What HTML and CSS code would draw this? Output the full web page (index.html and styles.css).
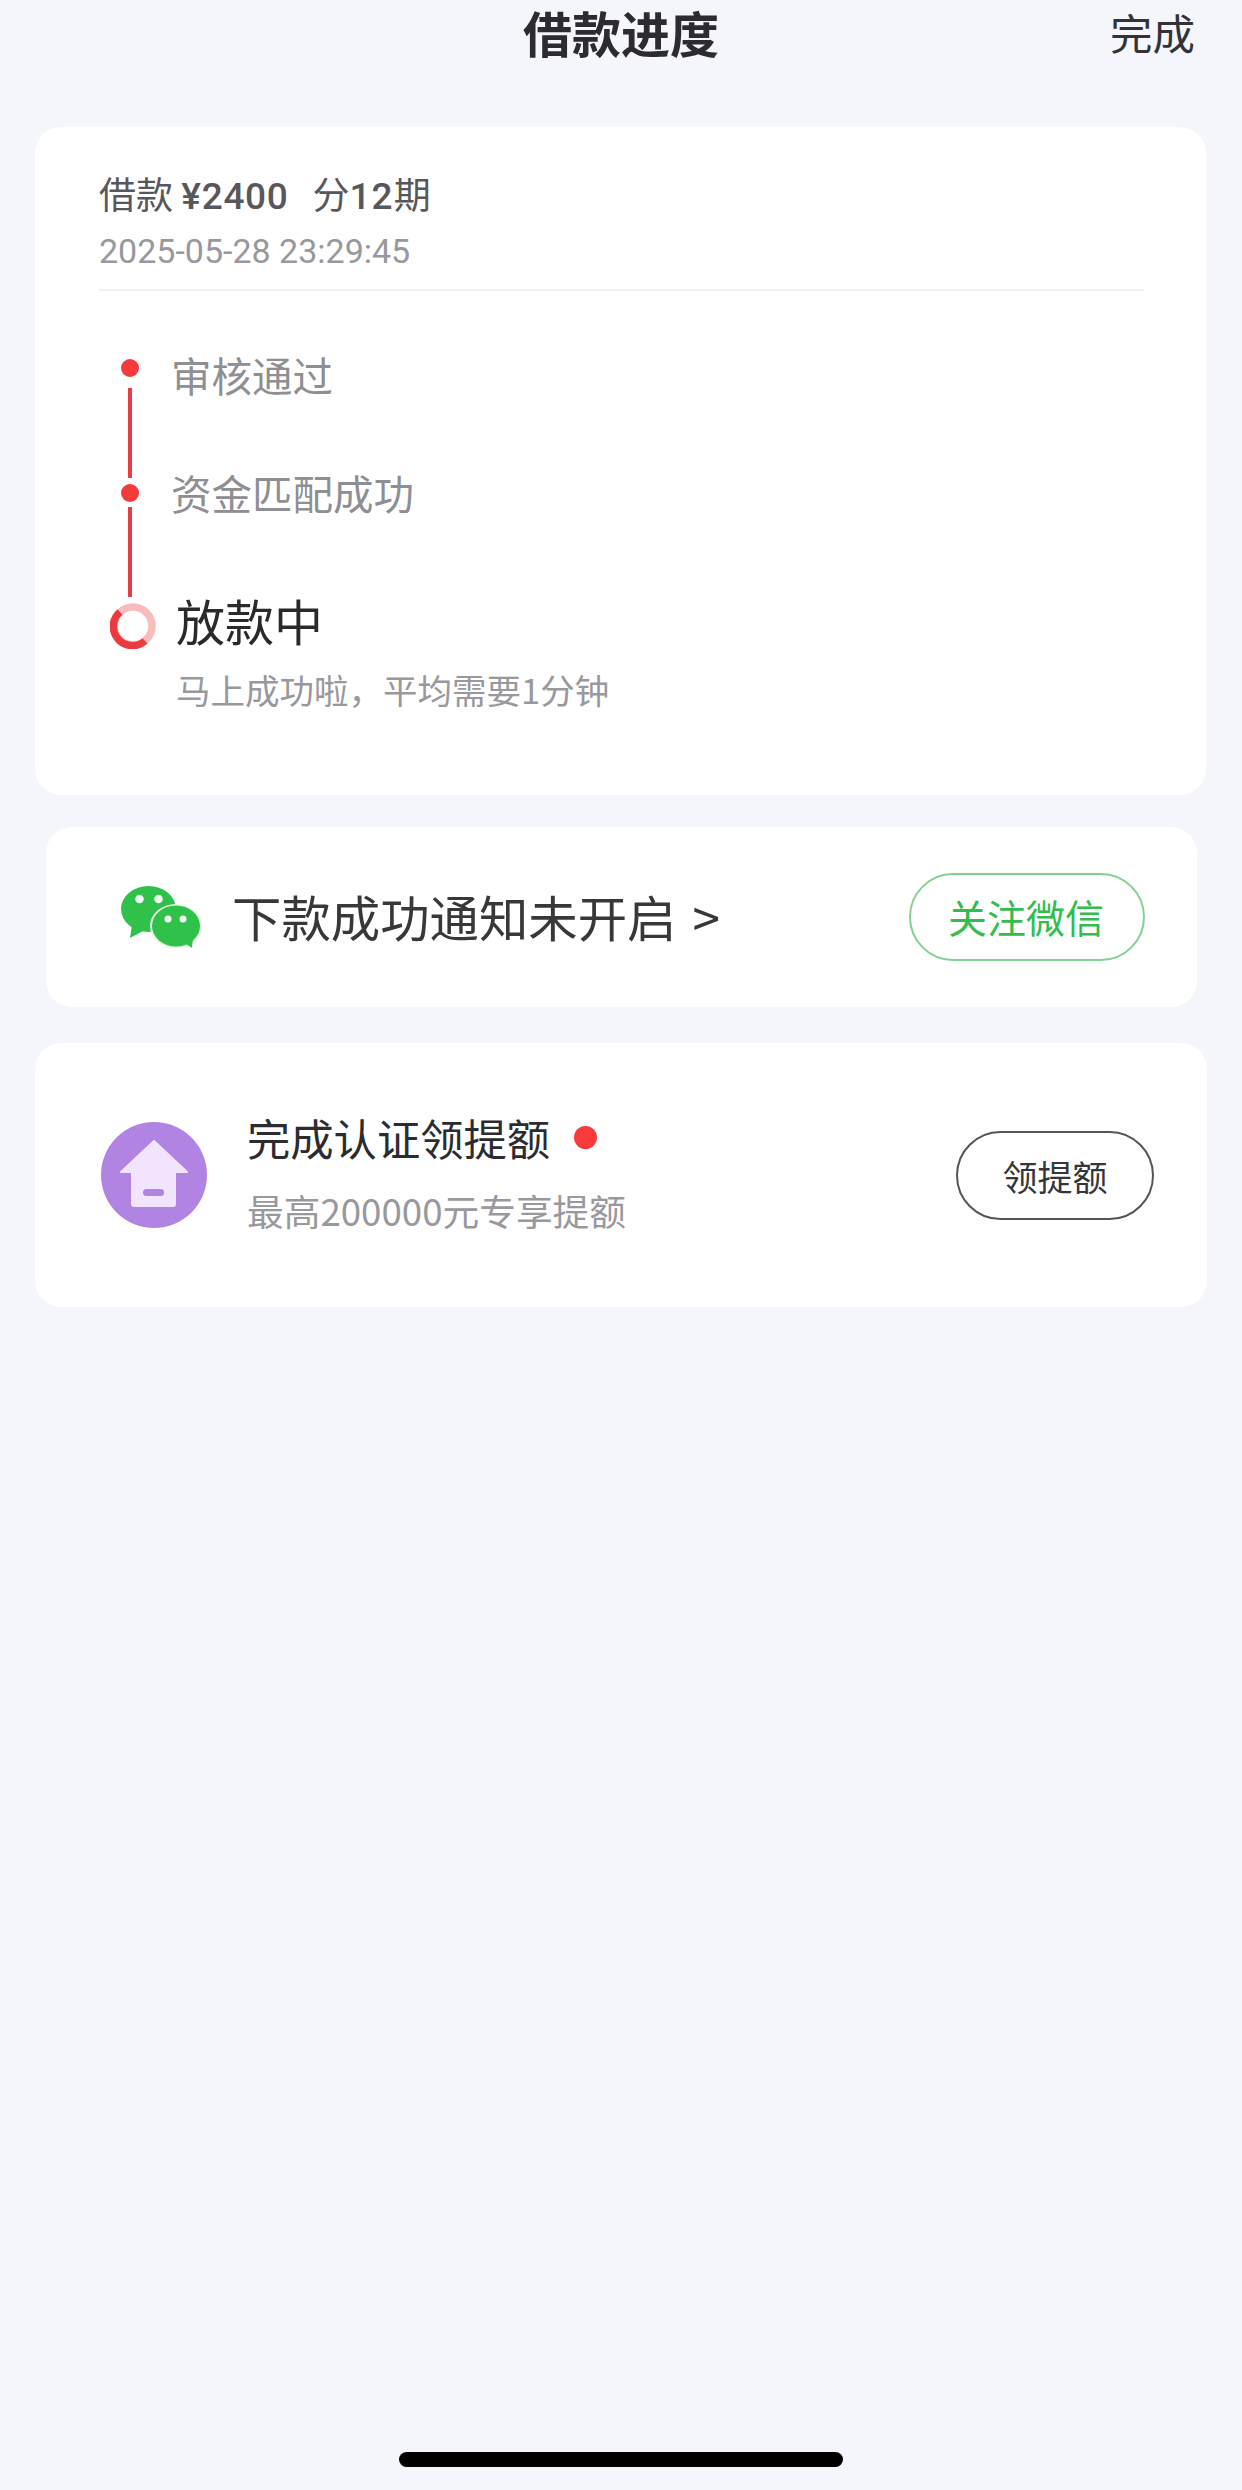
FILE: index.html
```html
<!DOCTYPE html>
<html lang="zh-CN">
<head>
<meta charset="UTF-8">
<meta name="viewport" content="width=device-width, initial-scale=1.0">
<title>借款进度</title>
<link rel="stylesheet" href="styles.css">
</head>
<body>

<header class="topbar">
    <h1 class="topbar-title">借款进度</h1>
    <span class="topbar-done">完成</span>
</header>

<section class="card progress-card">
    <div class="loan-info">
        <div class="loan-amount">借款 <b>¥2400</b><span class="loan-term">分<b>12</b>期</span></div>
        <div class="loan-date">2025-05-28 23:29:45</div>
    </div>
    <div class="timeline">
        <div class="rail">
            <span class="rail-dot"></span>
            <span class="rail-line"></span>
            <span class="rail-dot rail-dot-second"></span>
            <span class="rail-line rail-line-second"></span>
            <svg class="rail-ring" width="46" height="46" viewBox="0 0 46 46">
                <circle cx="23" cy="23" r="19" fill="none" stroke="#f9bcbc" stroke-width="7.5"/>
                <path d="M10 9A19 19 0 0 0 35 38" fill="none" stroke="#ec3a41" stroke-width="7.5"/>
            </svg>
        </div>
        <div class="steps">
            <div class="step-done">审核通过</div>
            <div class="step-done step-second">资金匹配成功</div>
            <div class="step-current">放款中</div>
            <div class="step-note">马上成功啦，平均需要1分钟</div>
        </div>
    </div>
</section>

<section class="card wechat-card">
    <svg class="wechat-icon" width="80" height="64" viewBox="0 0 80 64">
        <ellipse cx="27.5" cy="24" rx="27.5" ry="23" fill="#2fc14a"/>
        <path d="M11 40L9 53L24 45Z" fill="#2fc14a"/>
        <ellipse cx="55" cy="41" rx="26" ry="22" fill="#e4f8e6"/>
        <ellipse cx="55" cy="41" rx="24" ry="20.5" fill="#2fc14a"/>
        <path d="M62 57L71 63L72 53Z" fill="#2fc14a"/>
        <circle cx="18.5" cy="14" r="4.3" fill="#eefaf0"/>
        <circle cx="37.5" cy="14" r="4.3" fill="#eefaf0"/>
        <circle cx="47" cy="34" r="3.5" fill="#eefaf0"/>
        <circle cx="62" cy="34" r="3.5" fill="#eefaf0"/>
    </svg>
    <span class="wechat-text">下款成功通知未开启 &gt;</span>
    <span class="pill pill-green">关注微信</span>
</section>

<section class="card credit-card">
    <svg class="credit-icon" width="106" height="106" viewBox="0 0 106 106">
        <circle cx="53" cy="53" r="53" fill="#b184e4"/>
        <path d="M53 19L86 50H74V82a2 2 0 0 1-2 2H33a2 2 0 0 1-2-2V50H20Z" fill="#f3e4fd" stroke="#f3e4fd" stroke-width="2" stroke-linejoin="round"/>
        <rect x="42" y="67" width="21" height="7" rx="3.5" fill="#b184e4"/>
    </svg>
    <div class="credit-body">
        <div class="credit-title">完成认证领提额<span class="red-dot"></span></div>
        <div class="credit-note">最高200000元专享提额</div>
    </div>
    <span class="pill pill-dark">领提额</span>
</section>

<div class="home-bar"></div>

</body>
</html>
```

FILE: styles.css
```css
* {
    box-sizing: border-box;
}

body {
    margin: 0;
    min-height: 2490px;
    display: flex;
    flex-direction: column;
    background-color: #f4f6fb;
    color: #2c2c30;
    font-family: "Noto Sans CJK SC", "Roboto", sans-serif;
}

/* Top bar */
.topbar {
    height: 127px;
    display: grid;
    grid-template-columns: 1fr auto 1fr;
    align-items: start;
    padding: 0 47px;
}

.topbar-title {
    grid-column: 2;
    margin: 0;
    font-size: 49px;
    line-height: 64px;
    font-weight: 700;
}

.topbar-done {
    grid-column: 3;
    justify-self: end;
    font-size: 42.5px;
    line-height: 64px;
    color: #333336;
}

/* Cards */
.card {
    background-color: #fff;
    border-radius: 26px;
}

.progress-card {
    width: 1171px;
    height: 668px;
    margin-left: 35px;
    padding: 41px 62px 0 64px;
}

.loan-info {
    height: 123px;
    border-bottom: 2px solid #f1f1f4;
}

.loan-amount {
    font-size: 37px;
    line-height: 50px;
    color: #58585c;
}

.loan-amount b {
    font-family: "Roboto", sans-serif;
    font-weight: 500;
    letter-spacing: 0.7px;
}

.loan-term {
    margin-left: 24px;
}

.loan-term b {
    letter-spacing: 1px;
}

.loan-date {
    margin-top: 9px;
    font-family: "Roboto", sans-serif;
    font-size: 34px;
    line-height: 40px;
    color: #98989d;
}

/* Timeline */
.timeline {
    display: flex;
    padding-top: 56px;
}

.rail {
    width: 62px;
    margin-top: 12px;
    display: flex;
    flex-direction: column;
    align-items: center;
}

.rail-dot {
    width: 18px;
    height: 18px;
    border-radius: 50%;
    background-color: #f43a3a;
}

.rail-dot-second {
    margin-top: 6px;
}

.rail-line {
    width: 4px;
    height: 90px;
    margin-top: 11px;
    background-color: #e83d44;
}

.rail-line-second {
    margin-top: 5px;
}

.rail-ring {
    margin-top: 6px;
    margin-left: 6px;
}

.steps {
    margin-left: 10px;
}

.step-done {
    font-size: 40.5px;
    line-height: 56px;
    color: #8e8e93;
}

.step-second {
    margin-top: 62px;
}

.step-current {
    margin-top: 67px;
    margin-left: 5px;
    font-size: 49px;
    line-height: 64px;
    color: #2a2a2c;
}

.step-note {
    margin-top: 14px;
    margin-left: 5px;
    font-size: 34.5px;
    line-height: 46px;
    color: #98989d;
}

/* WeChat notice */
.wechat-card {
    width: 1151px;
    height: 180px;
    margin: 32px 0 0 46px;
    padding: 0 52px 0 75px;
    display: flex;
    align-items: center;
}

.wechat-icon {
    flex: none;
}

.wechat-text {
    flex: 1;
    margin-left: 31px;
    padding-bottom: 4px;
    font-size: 49.4px;
    word-spacing: 5px;
    color: #38383b;
}

.pill {
    display: flex;
    align-items: center;
    justify-content: center;
    border-radius: 50px;
    background-color: #fff;
}

.pill-green {
    width: 236px;
    height: 88px;
    padding: 0 2px 2px 0;
    border: 2px solid #84d095;
    color: #32bd4e;
    font-size: 39px;
}

.pill-dark {
    width: 198px;
    height: 89px;
    border: 2px solid #555558;
    color: #36363a;
    font-size: 35px;
}

/* Credit limit */
.credit-card {
    width: 1172px;
    height: 264px;
    margin: 36px 0 0 35px;
    padding: 0 53px 0 66px;
    display: flex;
    align-items: center;
}

.credit-icon {
    flex: none;
}

.credit-body {
    flex: 1;
    margin-left: 40px;
    padding-bottom: 8px;
}

.credit-title {
    display: flex;
    align-items: center;
    font-size: 43.3px;
    line-height: 60px;
    color: #2c2c30;
}

.red-dot {
    width: 23px;
    height: 23px;
    margin-left: 24px;
    border-radius: 50%;
    background-color: #f93a3a;
}

.credit-note {
    margin-top: 18px;
    font-size: 36.7px;
    line-height: 50px;
    color: #98989d;
}

.home-bar {
    width: 444px;
    height: 15px;
    margin: auto 0 23px 399px;
    border-radius: 8px;
    background-color: #000;
}
```
